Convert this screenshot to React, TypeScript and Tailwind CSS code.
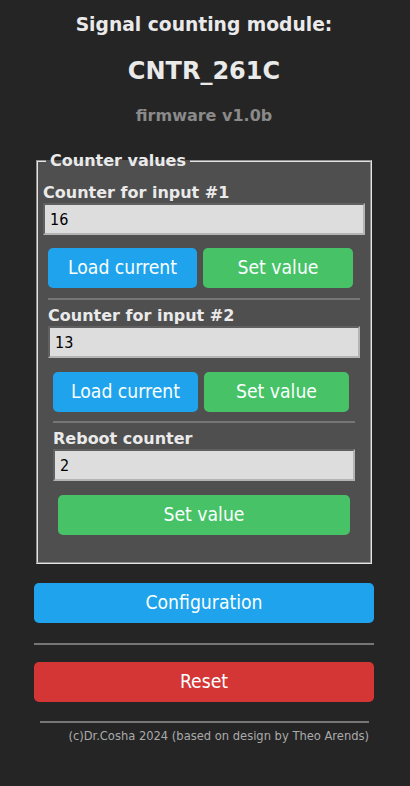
import React from "react";

const head = { fontFamily: '"DejaVu Sans", Verdana, sans-serif' };
const cond = {
  fontFamily: '"DejaVu Sans Condensed", "DejaVu Sans", Tahoma, sans-serif',
  fontStretch: "condensed" as const,
};

function Btn({ color, className, children }: { color: string; className: string; children: React.ReactNode }) {
  return (
    <button
      type="button"
      style={cond}
      className={`h-[40px] rounded-[5px] text-[19.2px] leading-[40px] text-[#faffff] ${color} ${className}`}
    >
      {children}
    </button>
  );
}

function Field({ value, className }: { value: string; className: string }) {
  return (
    <input
      readOnly
      value={value}
      style={cond}
      className={`block h-[32px] border-2 border-[#b4b4b4] [border-style:inset] bg-[#dddddd] pl-[5px] text-[16px] text-black outline-none ${className}`}
    />
  );
}

function Label({ children, className }: { children: React.ReactNode; className: string }) {
  return (
    <div style={head} className={`text-[16px] font-bold leading-[20px] text-[#eaeaea] ${className}`}>
      {children}
    </div>
  );
}

export default function App() {
  return (
    <div className="min-h-[786px] w-full bg-[#252525] pb-[30px]">
      <div className="ml-[34px] w-[340px]">
        <div style={head} className="pt-[13px] text-center text-[18.7px] font-bold leading-[24px] text-[#eaeaea]">
          Signal counting module:
        </div>
        <div style={head} className="mt-[19px] text-center text-[24px] font-bold leading-[30px] text-[#eaeaea]">
          CNTR_261C
        </div>
        <div style={head} className="mt-[20px] text-center text-[16px] font-bold leading-[20px] text-[#8a8a8a]">
          firmware v1.0b
        </div>

        <fieldset className="mx-[2px] mt-[24px] border-2 border-[#e4e4e4] [border-style:groove] bg-[#4f4f4f] px-[5px] pb-[27px]">
          <legend style={head} className="ml-[3px] px-[4px] text-[16px] font-bold leading-[22px] text-[#eaeaea]">
            Counter values
          </legend>

          <Label className="mt-[11px]">Counter for input #1</Label>
          <Field value="16" className="w-full" />
          <div className="mt-[13px] flex gap-[6px] px-[5px]">
            <Btn color="bg-[#1fa3ec]" className="w-[149px]">Load current</Btn>
            <Btn color="bg-[#47c266]" className="w-[150px]">Set value</Btn>
          </div>
          <div className="mx-[5px] mt-[10px] h-[2px] bg-[#767676]" />

          <div className="mx-[5px]">
            <Label className="mt-[6px]">Counter for input #2</Label>
            <Field value="13" className="w-full" />
            <div className="mt-[14px] flex gap-[6px] px-[5px]">
              <Btn color="bg-[#1fa3ec]" className="w-[145px]">Load current</Btn>
              <Btn color="bg-[#47c266]" className="w-[145px]">Set value</Btn>
            </div>
            <div className="mx-[5px] mt-[9px] h-[2px] bg-[#767676]" />

            <div className="mx-[5px]">
              <Label className="mt-[6px]">Reboot counter</Label>
              <Field value="2" className="w-full" />
              <div className="mt-[14px] px-[5px]">
                <Btn color="bg-[#47c266]" className="w-full">Set value</Btn>
              </div>
            </div>
          </div>
        </fieldset>

        <Btn color="bg-[#1fa3ec]" className="mt-[19px] block w-full">Configuration</Btn>
        <div className="mt-[20px] h-[2px] bg-[#767676]" />
        <Btn color="bg-[#d43535]" className="mt-[17px] block w-full">Reset</Btn>
        <div className="ml-[6px] mr-[5px] mt-[19px] h-[2px] bg-[#767676]" />
        <div style={cond} className="mt-[5px] pr-[5px] text-right text-[12.8px] leading-[16px] text-[#aaaaaa]">
          (c)Dr.Cosha 2024 (based on design by Theo Arends)
        </div>
      </div>
    </div>
  );
}
